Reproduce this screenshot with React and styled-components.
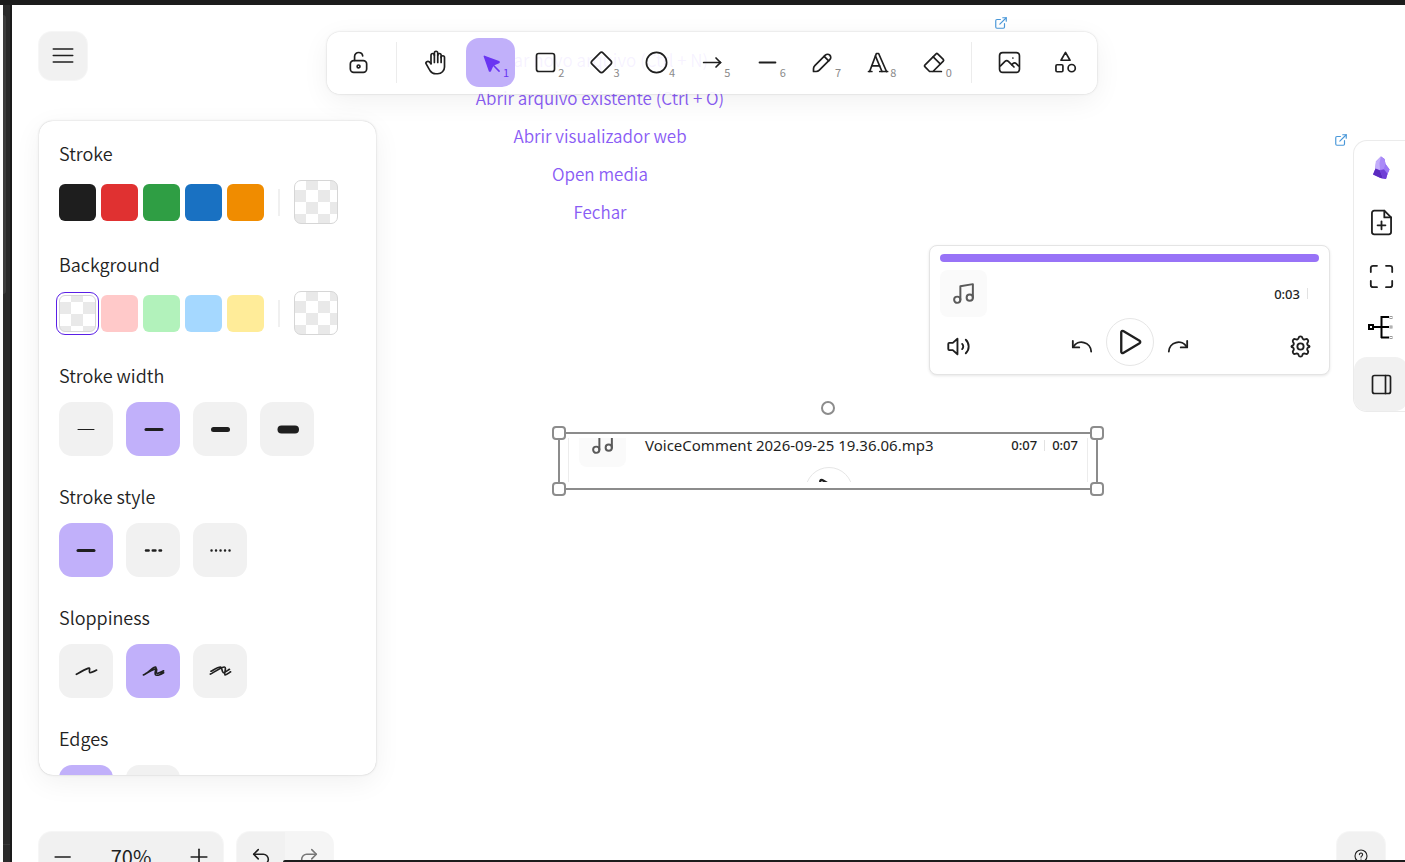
import React from 'react';
import styled, { createGlobalStyle, css } from 'styled-components';
import { ExternalLink, Music, Undo2, Redo2 } from 'lucide-react';

const UI_FONT = '"Noto Sans CJK SC", "Noto Sans", sans-serif';
const UI_FONT_LIGHT =
  '"Noto Sans CJK SC DemiLight", "Noto Sans CJK SC Light", "Noto Sans CJK SC", "Noto Sans", sans-serif';
const MEDIA_FONT = '"Noto Sans", "Open Sans", sans-serif';
const ISLAND_SHADOW =
  '0 0 1px rgba(0,0,0,.2), 0 0 3px rgba(0,0,0,.1), 0 7px 28px rgba(0,0,0,.06)';

const GlobalStyle = createGlobalStyle`
  * { box-sizing: border-box; }
  html, body { margin: 0; height: 100%; overflow: hidden; }
  #root { height: 100%; }
  body { background: #fff; color: #1f1f1f; font-family: ${UI_FONT}; font-size: 18px; }
  button { font: inherit; color: inherit; border: 0; padding: 0; background: none; }
  svg { display: block; flex: none; }
`;

const Shell = styled.div`
  position: relative;
  display: grid;
  grid-template-columns: 12px minmax(0, 1fr);
  grid-template-rows: 5px minmax(0, 1fr);
  height: 100vh;
  overflow: hidden;
`;

const TitleEdge = styled.div`
  grid-column: 1 / -1;
  background: #1c1c1c;
`;

const WindowEdge = styled.div`
  display: flex;
  flex-direction: column;
  justify-content: space-between;
  background: #2b2b2b;
  border-left: 3px solid #fff;
  border-right: 2px solid #1a1a1a;
`;

const EdgeThumb = styled.div`
  width: 3px;
  height: 279px;
  margin-top: 10px;
  border-radius: 0 3px 3px 0;
  background: #3d3d3d;
`;

const EdgeFoot = styled.div`
  height: 18px;
  border-top: 1px solid #3a3a3a;
`;

const Main = styled.main`
  position: relative;
  display: flex;
  flex-direction: column;
  min-width: 0;
  min-height: 0;
`;

const Canvas = styled.div`
  position: absolute;
  inset: 0;
  overflow: hidden;
`;

const CanvasItem = styled.div`
  position: absolute;
  left: ${(p) => p.$x}px;
  top: ${(p) => p.$y}px;
`;

const StartLinks = styled.nav`
  display: flex;
  flex-direction: column;
  align-items: center;
  width: 320px;
`;

const StartLink = styled.a`
  color: #8a5cf5;
  font-family: ${UI_FONT_LIGHT};
  font-size: 17px;
  font-weight: 350;
  line-height: 38px;
  text-decoration: none;
  white-space: nowrap;
`;

const OpenLink = styled.a`
  display: block;
  color: #4a98d9;
`;

const Card = styled.section`
  display: flex;
  flex-direction: column;
  width: ${(p) => p.$width}px;
  padding: 8px 10px;
  border: 1px solid #e4e4e4;
  border-radius: 8px;
  background: #fff;
  box-shadow: 0 1px 3px rgba(0, 0, 0, 0.1);
  font-family: ${MEDIA_FONT};
`;

const Progress = styled.div`
  height: 8px;
  border-radius: 4px;
  background: #9873f7;
`;

const TrackRow = styled.div`
  display: flex;
  align-items: center;
  margin-top: 8px;
`;

const Cover = styled.div`
  display: grid;
  place-items: center;
  width: 47px;
  height: 47px;
  border-radius: 8px;
  background: #fafafa;
  color: #5a5a5a;
`;

const TrackName = styled.span`
  margin-left: 19px;
  font-size: 15px;
  line-height: 14px;
  white-space: nowrap;
`;

const Times = styled.div`
  display: flex;
  align-items: center;
  gap: 7px;
  margin-left: auto;
  margin-right: ${(p) => p.$inset}px;
  font-size: 13px;
  font-weight: 500;
  line-height: 14px;
`;

const TimeSplit = styled.span`
  width: 1px;
  height: 11px;
  background: #e2e2e2;
`;

const Controls = styled.div`
  display: grid;
  grid-template-columns: 1fr auto 1fr;
  align-items: center;
  padding: 1px 6px 0;
`;

const Transport = styled.div`
  display: flex;
  align-items: center;
  gap: 13px;
`;

const IconButton = styled.button`
  display: grid;
  place-items: center;
  justify-self: ${(p) => p.$side || 'start'};
  margin-top: 8px;
`;

const PlayButton = styled.button`
  display: grid;
  place-items: center;
  width: 48px;
  height: 48px;
  border: 1px solid #e6e6e6;
  border-radius: 50%;
`;

const Selection = styled.div`
  position: relative;
  width: 540px;
  height: 58px;
  padding: 4px 8px 6px;
  border: 2px solid #8c8c8c;
`;

const EmbedView = styled.div`
  display: flex;
  flex-direction: column;
  height: 44px;
  overflow: hidden;
  border: solid #ececec;
  border-width: 0 1px;
  padding: 0 9px 0 10px;
  font-family: ${MEDIA_FONT};
`;

const EmbedRow = styled.div`
  display: flex;
  align-items: flex-start;
  flex: none;
  height: 29px;
`;

const EmbedCover = styled(Cover)`
  align-self: flex-end;
`;

const EmbedPlay = styled(PlayButton)`
  align-self: center;
  flex: none;
`;

const Handle = styled.span`
  position: absolute;
  width: 14px;
  height: 14px;
  border: 2px solid #8c8c8c;
  border-radius: 4px;
  background: #fff;
  ${(p) => (p.$at.includes('n') ? 'top: -8px;' : 'bottom: -8px;')}
  ${(p) => (p.$at.includes('w') ? 'left: -8px;' : 'right: -8px;')}
`;

const RotateHandle = styled.span`
  position: absolute;
  top: -33px;
  left: calc(50% - 7px);
  width: 14px;
  height: 14px;
  border: 2px solid #8c8c8c;
  border-radius: 50%;
  background: #fff;
`;

const Header = styled.header`
  position: relative;
  display: grid;
  grid-template-columns: 1fr auto 1fr;
  align-items: flex-start;
  padding: 27px 20px 0 27px;
`;

const softTile = css`
  background: #f1f1f1;
  border-radius: 13px;
`;

const SquareButton = styled.button`
  ${softTile}
  display: grid;
  place-items: center;
  width: 48px;
  height: 48px;
  box-shadow: 0 0 0 1px #f6f6f6;
`;

const Toolbar = styled.div`
  display: flex;
  align-items: center;
  justify-content: space-between;
  width: 770px;
  height: 62px;
  padding: 0 7px 1px;
  border-radius: 13px;
  background: rgba(255, 255, 255, 0.92);
  box-shadow: ${ISLAND_SHADOW};
`;

const Tool = styled.button`
  display: grid;
  place-items: center;
  position: relative;
  width: 49px;
  height: 49px;
  border-radius: 13px;
  background: ${(p) => (p.$active ? '#c1b0fa' : 'transparent')};
  color: ${(p) => (p.$active ? '#6a35f2' : '#1f1f1f')};
`;

const ToolKey = styled.span`
  position: absolute;
  right: 6px;
  bottom: 7px;
  color: ${(p) => (p.$active ? '#6a35f2' : '#8a8a8a')};
  font-size: 11px;
  line-height: 16px;
`;

const ToolDivider = styled.span`
  width: 1px;
  height: 41px;
  margin: 0 7px;
  background: #ececec;
`;

const Body = styled.div`
  position: relative;
  display: flex;
  justify-content: space-between;
  flex: 1;
  min-height: 0;
  padding: 27px 0 57px 27px;
`;

const Panel = styled.aside`
  width: 337px;
  padding: 19px 20px 0;
  overflow: hidden;
  border-radius: 14px;
  background: #fff;
  box-shadow: ${ISLAND_SHADOW};
`;

const Group = styled.fieldset`
  min-width: 0;
  margin: 0;
  padding: 0 0 27px;
  border: 0;
`;

const GroupTitle = styled.legend`
  padding: 0 0 14px;
  font-family: ${UI_FONT_LIGHT};
  font-size: 18px;
  font-weight: 350;
  line-height: 26px;
  color: #222;
`;

const Swatches = styled.div`
  display: flex;
  align-items: center;
  gap: 5px;
  height: 44px;
`;

const checker = css`
  background: repeating-conic-gradient(#fff 0 25%, #e9e9e9 0 50%) 11px -3px / 24px 24px;
  border: 1px solid #d6d6d6;
`;

const Swatch = styled.button`
  width: 37px;
  height: 37px;
  border-radius: 6px;
  background: ${(p) => p.$color};
  ${(p) => !p.$color && checker}
  ${(p) => p.$selected && 'outline: 1px solid #5a20e6; outline-offset: 2px; background-position: 11px -6px;'}
`;

const CurrentSwatch = styled.button`
  ${checker}
  width: 44px;
  height: 44px;
  border-radius: 7px;
`;

const SwatchDivider = styled.span`
  width: 2px;
  height: 27px;
  margin: 0 9px;
  background: #f0f0f0;
`;

const Options = styled.div`
  display: flex;
  gap: 13px;
`;

const Option = styled.button`
  display: grid;
  place-items: center;
  width: 54px;
  height: 54px;
  border-radius: 13px;
  background: ${(p) => (p.$active ? '#c1b0fa' : '#f1f1f1')};
  color: #1f1f1f;
`;

const SideBar = styled.div`
  display: flex;
  flex-direction: column;
  align-self: flex-start;
  width: 51px;
  margin-top: 20px;
  border-radius: 13px 0 0 13px;
  background: #fff;
  box-shadow: 0 0 0 1px #ebebeb;
`;

const SideButton = styled.button`
  display: grid;
  place-items: center;
  width: 54px;
  height: 54px;
  border-radius: 13px;
  background: ${(p) => (p.$active ? '#f1f1f1' : 'transparent')};
`;

const Footer = styled.footer`
  position: relative;
  display: flex;
  align-items: flex-start;
  gap: 14px;
  height: 30px;
  padding: 0 20px 0 27px;
`;

const FooterGroup = styled.div`
  ${softTile}
  display: flex;
  overflow: hidden;
  flex: none;
  box-shadow: 0 0 0 1px #f6f6f6;
`;

const FooterButton = styled.button`
  display: grid;
  place-items: center;
  width: ${(p) => p.$width || 48}px;
  height: 49px;
  font-size: 20px;
  background: ${(p) => (p.$muted ? '#f5f5f5' : 'transparent')};
  color: ${(p) => (p.$muted ? '#777' : '#1f1f1f')};
`;

const HelpButton = styled(SquareButton)`
  margin-left: auto;
  flex: none;
`;

const BottomEdge = styled.div`
  position: absolute;
  left: 283px;
  right: 0;
  bottom: 0;
  height: 2px;
  border-radius: 4px 0 0 0;
  background: #1c1c1c;
`;

function Icon({ vb = 24, size = 27, width = 1.5, children, d = [] }) {
  return (
    <svg
      width={size}
      height={size}
      viewBox={`0 0 ${vb} ${vb}`}
      fill="none"
      stroke="currentColor"
      strokeWidth={width}
      strokeLinecap="round"
      strokeLinejoin="round"
      aria-hidden="true"
    >
      {d.map((path) => (
        <path key={path} d={path} />
      ))}
      {children}
    </svg>
  );
}

const tools = [
  {
    name: 'Hand',
    icon: (
      <Icon
        d={[
          'M8 13v-7.5a1.5 1.5 0 0 1 3 0v6.5',
          'M11 5.5v-2a1.5 1.5 0 1 1 3 0v8.5',
          'M14 5.5a1.5 1.5 0 0 1 3 0v6.5',
          'M17 7.5a1.5 1.5 0 0 1 3 0v8.5a6 6 0 0 1 -6 6h-2h.208a6 6 0 0 1 -5.012 -2.7a69.74 69.74 0 0 1 -.196 -.3c-.312 -.479 -1.407 -2.388 -3.286 -5.728a1.5 1.5 0 0 1 .536 -2.022a1.867 1.867 0 0 1 2.28 .28l1.47 1.47',
        ]}
      />
    ),
  },
  {
    name: 'Selection',
    hotkey: '1',
    active: true,
    icon: (
      <Icon vb={22} width={1.25}>
        <path
          fill="currentColor"
          d="M6 6l4.153 11.793a.365 .365 0 0 0 .331 .207a.366 .366 0 0 0 .332 -.207l2.184 -4.793l4.787 -1.994a.355 .355 0 0 0 .213 -.323a.355 .355 0 0 0 -.213 -.323l-11.787 -4.36z"
        />
        <path d="M13.5 13.5l4.5 4.5" />
      </Icon>
    ),
  },
  {
    name: 'Rectangle',
    hotkey: '2',
    icon: (
      <Icon>
        <rect x="4" y="4" width="16" height="16" rx="2" />
      </Icon>
    ),
  },
  {
    name: 'Diamond',
    hotkey: '3',
    icon: (
      <Icon
        d={[
          'M10.5 20.4l-6.9 -6.9c-.781 -.781 -.781 -2.219 0 -3l6.9 -6.9c.781 -.781 2.219 -.781 3 0l6.9 6.9c.781 .781 .781 2.219 0 3l-6.9 6.9c-.781 .781 -2.219 .781 -3 0z',
        ]}
      />
    ),
  },
  {
    name: 'Ellipse',
    hotkey: '4',
    icon: (
      <Icon>
        <circle cx="12" cy="12" r="9" />
      </Icon>
    ),
  },
  { name: 'Arrow', hotkey: '5', icon: <Icon d={['M5 12h15', 'M16 16l4 -4', 'M16 8l4 4']} /> },
  { name: 'Line', hotkey: '6', icon: <Icon vb={20} width={1.5} d={['M4.167 10h11.666']} /> },
  {
    name: 'Draw',
    hotkey: '7',
    icon: (
      <Icon
        vb={20}
        width={1.25}
        d={[
          'm7.643 15.69 7.774-7.773a2.357 2.357 0 1 0-3.334-3.334L4.31 12.357a3.333 3.333 0 0 0-.977 2.357v1.953h1.953c.884 0 1.732-.352 2.357-.977Z',
          'm11.25 5.417 3.333 3.333',
        ]}
      />
    ),
  },
  {
    name: 'Text',
    hotkey: '8',
    icon: (
      <Icon d={['M4 20h3', 'M14 20h7', 'M6.9 15h6.9', 'M10.2 6.3l5.8 13.7', 'M5 20l6 -16h2l7 16']} />
    ),
  },
  {
    name: 'Eraser',
    hotkey: '0',
    icon: (
      <Icon
        d={[
          'M19 20h-10.5l-4.21 -4.3a1 1 0 0 1 0 -1.41l10 -10a1 1 0 0 1 1.41 0l5 5a1 1 0 0 1 0 1.41l-9.2 9.3',
          'M18 13.3l-6.3 -6.3',
        ]}
      />
    ),
  },
];

function ToolButton({ name, hotkey, active, icon }) {
  return (
    <Tool type="button" aria-label={name} aria-pressed={!!active} $active={active}>
      {icon}
      {hotkey && <ToolKey $active={active}>{hotkey}</ToolKey>}
    </Tool>
  );
}

function TopToolbar() {
  return (
    <Toolbar role="toolbar">
      <Tool type="button" aria-label="Keep tool active">
        <Icon
          vb={20}
          width={1.25}
          d={[
            'M13.542 8.542H6.458a2.5 2.5 0 0 0-2.5 2.5v3.75a2.5 2.5 0 0 0 2.5 2.5h7.084a2.5 2.5 0 0 0 2.5-2.5v-3.75a2.5 2.5 0 0 0-2.5-2.5Z',
            'M10 13.958a1.042 1.042 0 1 0 0-2.083 1.042 1.042 0 0 0 0 2.083Z',
            'M7.1 8.4V5.5c0-1.8 1.4-2.9 3-2.9 1.5 0 2.8 1 3 2.5',
          ]}
        />
      </Tool>
      <ToolDivider />
      {tools.map((tool) => (
        <ToolButton key={tool.name} {...tool} />
      ))}
      <ToolDivider />
      <Tool type="button" aria-label="Insert image">
        <Icon
          vb={20}
          width={1.25}
          d={[
            'M12.5 6.667h.01',
            'M4.91 2.625h10.18a2.284 2.284 0 0 1 2.285 2.284v10.182a2.284 2.284 0 0 1-2.284 2.284H4.909a2.284 2.284 0 0 1-2.284-2.284V4.909a2.284 2.284 0 0 1 2.284-2.284Z',
            'm3.333 12.5 3.334-3.333c.773-.745 1.726-.745 2.5 0l4.166 4.166',
            'm11.667 11.667.833-.834c.774-.744 1.726-.744 2.5 0l1.667 1.667',
          ]}
        />
      </Tool>
      <Tool type="button" aria-label="More tools">
        <Icon d={['M12 3l-4 7h8z']}>
          <circle cx="17.5" cy="17" r="3.2" />
          <rect x="3.5" y="14" width="6.2" height="6.2" rx="1" />
        </Icon>
      </Tool>
    </Toolbar>
  );
}

const lineIcon = (from, to, width, dash) => (
  <Icon vb={27} width={width}>
    <line x1={from} x2={to} y1="13.5" y2="13.5" strokeDasharray={dash} />
  </Icon>
);

const optionGroups = [
  {
    title: 'Stroke width',
    active: 1,
    options: [
      ['Thin', lineIcon(5, 21, 1)],
      ['Bold', lineIcon(6, 22, 3)],
      ['Extra bold', lineIcon(6.5, 20.5, 5)],
      ['Heavy', lineIcon(7.5, 21, 8)],
    ],
  },
  {
    title: 'Stroke style',
    active: 0,
    options: [
      ['Solid', lineIcon(5, 21, 3)],
      ['Dashed', lineIcon(6, 21, 2.6, '2.6 4.2')],
      ['Dotted', lineIcon(4.5, 23, 2.4, '0.1 4.4')],
    ],
  },
  {
    title: 'Sloppiness',
    active: 1,
    options: [
      [
        'Architect',
        <Icon
          vb={20}
          width={1.25}
          d={[
            'M2.5 12.038c1.655-.885 5.9-3.292 8.568-4.354 2.668-1.063.101 2.821 1.32 3.104 1.218.283 5.112-1.814 5.112-1.814',
          ]}
        />,
      ],
      [
        'Artist',
        <Icon
          vb={20}
          width={1.25}
          d={[
            'M2.5 12.563c1.655-.886 5.9-3.293 8.568-4.355 2.668-1.062.101 2.822 1.32 3.105 1.218.283 5.112-1.814 5.112-1.814m-13.469 2.23c2.963-1.586 6.13-5.62 7.468-4.998 1.338.623-1.153 4.11-.132 5.595 1.02 1.487 6.133-1.43 6.133-1.43',
          ]}
        />,
      ],
      [
        'Cartoonist',
        <Icon
          vb={20}
          width={1.25}
          d={[
            'M2.5 11.936c1.737-.879 8.627-5.346 10.42-5.268 1.795.078-.418 5.138.345 5.736.763.598 3.53-1.789 4.235-2.147M2.929 9.788c1.164-.519 5.47-3.28 6.987-3.114 1.519.165 1 3.827 2.121 4.109 1.122.281 3.839-2.016 4.606-2.42',
          ]}
        />,
      ],
    ],
  },
  {
    title: 'Edges',
    active: 0,
    options: [
      ['Sharp', null],
      ['Round', null],
    ],
  },
];

function ColorGroup({ title, colors, selected }) {
  return (
    <Group>
      <GroupTitle>{title}</GroupTitle>
      <Swatches>
        {colors.map((color, i) => (
          <Swatch
            key={color || 'transparent'}
            type="button"
            aria-label={color || 'transparent'}
            $color={color}
            $selected={selected === i}
          />
        ))}
        <SwatchDivider />
        <CurrentSwatch type="button" aria-label={`${title} colour`} />
      </Swatches>
    </Group>
  );
}

function StylePanel() {
  return (
    <Panel>
      <ColorGroup title="Stroke" colors={['#1e1e1e', '#e03131', '#2f9e44', '#1971c2', '#f08c00']} />
      <ColorGroup
        title="Background"
        selected={0}
        colors={['', '#ffc9c9', '#b2f2bb', '#a5d8ff', '#ffec99']}
      />
      {optionGroups.map(({ title, active, options }) => (
        <Group key={title}>
          <GroupTitle>{title}</GroupTitle>
          <Options>
            {options.map(([name, icon], i) => (
              <Option key={name} type="button" aria-label={name} aria-pressed={i === active} $active={i === active}>
                {icon}
              </Option>
            ))}
          </Options>
        </Group>
      ))}
    </Panel>
  );
}

function PlayIcon() {
  return (
    <Icon
      size={28}
      width={2}
      d={['M4.500 3.600v16.800c0 .9.9 1.400 1.700 1l14-8.400c.8-.5.8-1.600 0-2.100l-14-8.300c-.8-.4-1.700.1-1.700 1z']}
    />
  );
}

function AudioCard() {
  return (
    <Card $width={401}>
      <Progress />
      <TrackRow>
        <Cover>
          <Music size={25} strokeWidth={1.9} />
        </Cover>
        <Times $inset={11}>
          <span>0:03</span>
          <TimeSplit />
        </Times>
      </TrackRow>
      <Controls>
        <IconButton type="button" aria-label="Volume">
          <Icon size={25} width={1.8} d={['M11 4.5 6.5 8.5H3.2a1 1 0 0 0-1 1v5a1 1 0 0 0 1 1h3.3L11 19.5z', 'M15.5 9.5a3.5 3.5 0 0 1 0 5', 'M19 5.500a9 9 0 0 1 0 13']} />
        </IconButton>
        <Transport>
          <IconButton type="button" aria-label="Back">
            <Icon size={22} width={2} d={['M2 6.5v7h7', 'M2.5 13a10.5 10.5 0 0 1 19.5 5']} />
          </IconButton>
          <PlayButton type="button" aria-label="Play">
            <PlayIcon />
          </PlayButton>
          <IconButton type="button" aria-label="Forward">
            <Icon size={22} width={2} d={['M22 6.5v7h-7', 'M21.5 13a10.5 10.5 0 0 0-19.5 5']} />
          </IconButton>
        </Transport>
        <IconButton type="button" aria-label="Settings" $side="end">
          <Icon
            size={25}
            width={1.8}
            d={[
              'M10.200 3.700c.4-1.900 3.200-1.900 3.600 0a1.900 1.900 0 0 0 2.900 1.300c1.800-1 3.500 1.400 2.300 3a1.900 1.900 0 0 0 .3 3c1.900.4 1.900 1.600 0 2a1.900 1.900 0 0 0-.3 3c1.200 1.600-.5 4-2.300 3a1.900 1.900 0 0 0-2.900 1.300c-.4 1.900-3.200 1.900-3.600 0a1.900 1.900 0 0 0-2.900-1.300c-1.800 1-3.500-1.400-2.300-3a1.900 1.900 0 0 0-.3-3c-1.900-.4-1.900-1.600 0-2a1.900 1.900 0 0 0 .3-3c-1.200-1.600.5-4 2.300-3a1.900 1.900 0 0 0 2.900-1.300z',
            ]}
          >
            <circle cx="12" cy="12" r="3" />
          </Icon>
        </IconButton>
      </Controls>
    </Card>
  );
}

function SelectedEmbed() {
  return (
    <Selection>
      <EmbedView>
        <EmbedRow>
          <EmbedCover>
            <Music size={25} strokeWidth={1.9} />
          </EmbedCover>
          <TrackName>VoiceComment 2026-09-25 19.36.06.mp3</TrackName>
          <Times $inset={0}>
            <span>0:07</span>
            <TimeSplit />
            <span>0:07</span>
          </Times>
        </EmbedRow>
        <EmbedPlay type="button" aria-label="Play">
          <PlayIcon />
        </EmbedPlay>
      </EmbedView>
      {['nw', 'ne', 'sw', 'se'].map((at) => (
        <Handle key={at} $at={at} />
      ))}
      <RotateHandle />
    </Selection>
  );
}

function ObsidianMark() {
  return (
    <svg width="20" height="26" viewBox="0 0 20 26" aria-hidden="true">
      <path d="M10 1.500 13.500 4 14.500 9 18.500 14.500 16.500 19 15 24 9.500 23 2 19.500 4.500 13.500 5 6.500z" fill="#8b5cf0" />
      <path d="M10 1.500 13.500 4 14.500 9 13.500 14 8.500 15 4.500 13.500 5 6.500z" fill="#a98af7" />
      <path d="M10 1.500 8.500 8 9 15 4.500 13.500 5 6.500z" fill="#c3aefb" />
      <path d="M14.500 9 18.500 14.500 16.500 19 13 14.500z" fill="#9a78f5" />
      <path d="M4.500 13.500 9 15.500 12 23.500 9.500 23 2 19.500z" fill="#5b2bbf" />
      <path d="M9 15.500 13 14.500 16.500 19 15 24 12 23.500z" fill="#6f3fd6" />
    </svg>
  );
}

function RightBar() {
  return (
    <SideBar>
      <SideButton type="button" aria-label="Obsidian">
        <ObsidianMark />
      </SideButton>
      <SideButton type="button" aria-label="New drawing">
        <Icon width={1.6} d={['M14.500 1.500H5.500a2 2 0 0 0-2 2v17a2 2 0 0 0 2 2h13a2 2 0 0 0 2-2V7.500z', 'M14.500 1.500v6h6', 'M12 11v7', 'M8.500 14.500h7']} />
      </SideButton>
      <SideButton type="button" aria-label="Fullscreen">
        <Icon width={1.6} d={['M2.500 8V4.500a2 2 0 0 1 2-2H8', 'M16 2.500h3.500a2 2 0 0 1 2 2V8', 'M21.500 16v3.500a2 2 0 0 1-2 2H16', 'M8 21.500H4.500a2 2 0 0 1-2-2V16']} />
      </SideButton>
      <SideButton type="button" aria-label="Mind map">
        <svg width="28" height="28" viewBox="0 0 28 28" fill="none" stroke="#000" strokeWidth="2" aria-hidden="true">
          <rect x="2" y="9" width="4" height="4" />
          <path d="M7 11h15M14.500 0v22M14 1h8M14 21.500h8" />
          <g stroke="#999" strokeWidth="1">
            <rect x="23" y=".5" width="2" height="2" />
            <rect x="23" y="10" width="2" height="2" />
            <rect x="23" y="20.500" width="2" height="2" />
          </g>
        </svg>
      </SideButton>
      <SideButton type="button" aria-label="Sidebar" $active>
        <Icon vb={27} width={1.7} d={['M17.500 4.500v18']}>
          <rect x="4.500" y="4.500" width="18" height="18" rx="2" />
        </Icon>
      </SideButton>
    </SideBar>
  );
}

export default function App() {
  return (
    <>
      <GlobalStyle />
      <Shell>
        <TitleEdge />
        <WindowEdge>
          <EdgeThumb />
          <EdgeFoot />
        </WindowEdge>
        <Main>
          <Canvas>
            <CanvasItem $x={428} $y={36}>
              <StartLinks>
                <StartLink href="#new">Criar novo arquivo (Ctrl + N)</StartLink>
                <StartLink href="#open">Abrir arquivo existente (Ctrl + O)</StartLink>
                <StartLink href="#web">Abrir visualizador web</StartLink>
                <StartLink href="#media">Open media</StartLink>
                <StartLink href="#close">Fechar</StartLink>
              </StartLinks>
            </CanvasItem>
            <CanvasItem $x={982} $y={11}>
              <OpenLink href="#embed-1" aria-label="Open embed">
                <ExternalLink size={14} />
              </OpenLink>
            </CanvasItem>
            <CanvasItem $x={1322} $y={128}>
              <OpenLink href="#embed-2" aria-label="Open embed">
                <ExternalLink size={14} />
              </OpenLink>
            </CanvasItem>
            <CanvasItem $x={917} $y={240}>
              <AudioCard />
            </CanvasItem>
            <CanvasItem $x={546} $y={427}>
              <SelectedEmbed />
            </CanvasItem>
          </Canvas>
          <Header>
            <SquareButton type="button" aria-label="Menu">
              <Icon size={26} width={1.4} d={['M3 5.500h18', 'M3 11.500h18', 'M3 17.500h18']} />
            </SquareButton>
            <TopToolbar />
          </Header>
          <Body>
            <StylePanel />
            <RightBar />
          </Body>
          <Footer>
            <FooterGroup>
              <FooterButton type="button" aria-label="Zoom out">
                <Icon vb={20} size={26} width={1.25} d={['M4 10h11.500']} />
              </FooterButton>
              <FooterButton type="button" $width={88}>70%</FooterButton>
              <FooterButton type="button" aria-label="Zoom in">
                <Icon vb={20} size={26} width={1.25} d={['M10 4v12', 'M4 10h12']} />
              </FooterButton>
            </FooterGroup>
            <FooterGroup>
              <FooterButton type="button" aria-label="Undo">
                <Undo2 size={22} strokeWidth={1.7} />
              </FooterButton>
              <FooterButton type="button" aria-label="Redo" $muted>
                <Redo2 size={22} strokeWidth={1.7} />
              </FooterButton>
            </FooterGroup>
            <HelpButton type="button" aria-label="Help">
              <Icon vb={14} size={14} width={1.1} d={['M5.400 5.600a1.600 1.600 0 1 1 2.400 1.400c-.6.300-.8.600-.8 1.200', 'M7 10v.1']}>
                <circle cx="7" cy="7" r="6" />
              </Icon>
            </HelpButton>
          </Footer>
        </Main>
        <BottomEdge />
      </Shell>
    </>
  );
}
